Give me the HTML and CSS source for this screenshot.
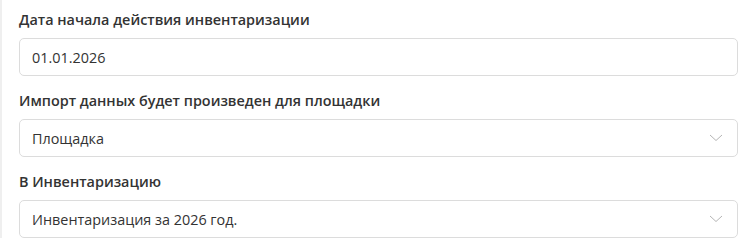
FILE: index.html
```html
<!DOCTYPE html>
<html lang="ru">

<head>
  <meta charset="UTF-8">
  <meta name="viewport" content="width=device-width, initial-scale=1.0">
  <title>Импорт инвентаризации</title>
  <link rel="stylesheet" href="styles.css">
</head>

<body>
  <div class="panel">
    <div class="field">
      <label class="field-label" for="startDate">Дата начала действия инвентаризации</label>
      <input type="text" id="startDate" class="field-input" value="01.01.2026">
    </div>

    <div class="field">
      <label class="field-label" for="site">Импорт данных будет произведен для площадки</label>
      <div class="field-input field-select" id="site">
        <span>Площадка</span>
        <svg class="chevron" width="14" height="8" viewBox="0 0 14 8">
          <path d="M1 1 L7 6.5 L13 1" fill="none" stroke="#b5b5b5" stroke-width="1" />
        </svg>
      </div>
    </div>

    <div class="field">
      <label class="field-label" for="inventory">В Инвентаризацию</label>
      <div class="field-input field-select" id="inventory">
        <span>Инвентаризация за 2026 год.</span>
        <svg class="chevron" width="14" height="8" viewBox="0 0 14 8">
          <path d="M1 1 L7 6.5 L13 1" fill="none" stroke="#b5b5b5" stroke-width="1" />
        </svg>
      </div>
    </div>
  </div>
</body>

</html>
```

FILE: styles.css
```css
html {
  font-family: "Open Sans", "Noto Sans", sans-serif;
}

body {
  margin: 0;
  background-color: #fff;
  color: #333;
}

.panel {
  border-left: 2px solid #efefef;
  padding: 9px 17px 0 17px;
  width: 719px;
}

.field {
  margin-bottom: 14px;
}

.field-label {
  display: block;
  font-size: 14.4px;
  font-weight: 600;
  line-height: 21px;
  color: #333;
  margin-bottom: 8px;
}

.field-input {
  box-sizing: border-box;
  display: flex;
  align-items: center;
  width: 100%;
  height: 38px;
  padding: 0 12px;
  border: 1px solid #dcdcdc;
  border-radius: 5px;
  background-color: #fff;
  font-family: inherit;
  font-size: 14.4px;
  color: #333;
  outline: none;
}

.field-select {
  justify-content: space-between;
  padding-right: 14px;
}

.chevron {
  display: block;
}
```
